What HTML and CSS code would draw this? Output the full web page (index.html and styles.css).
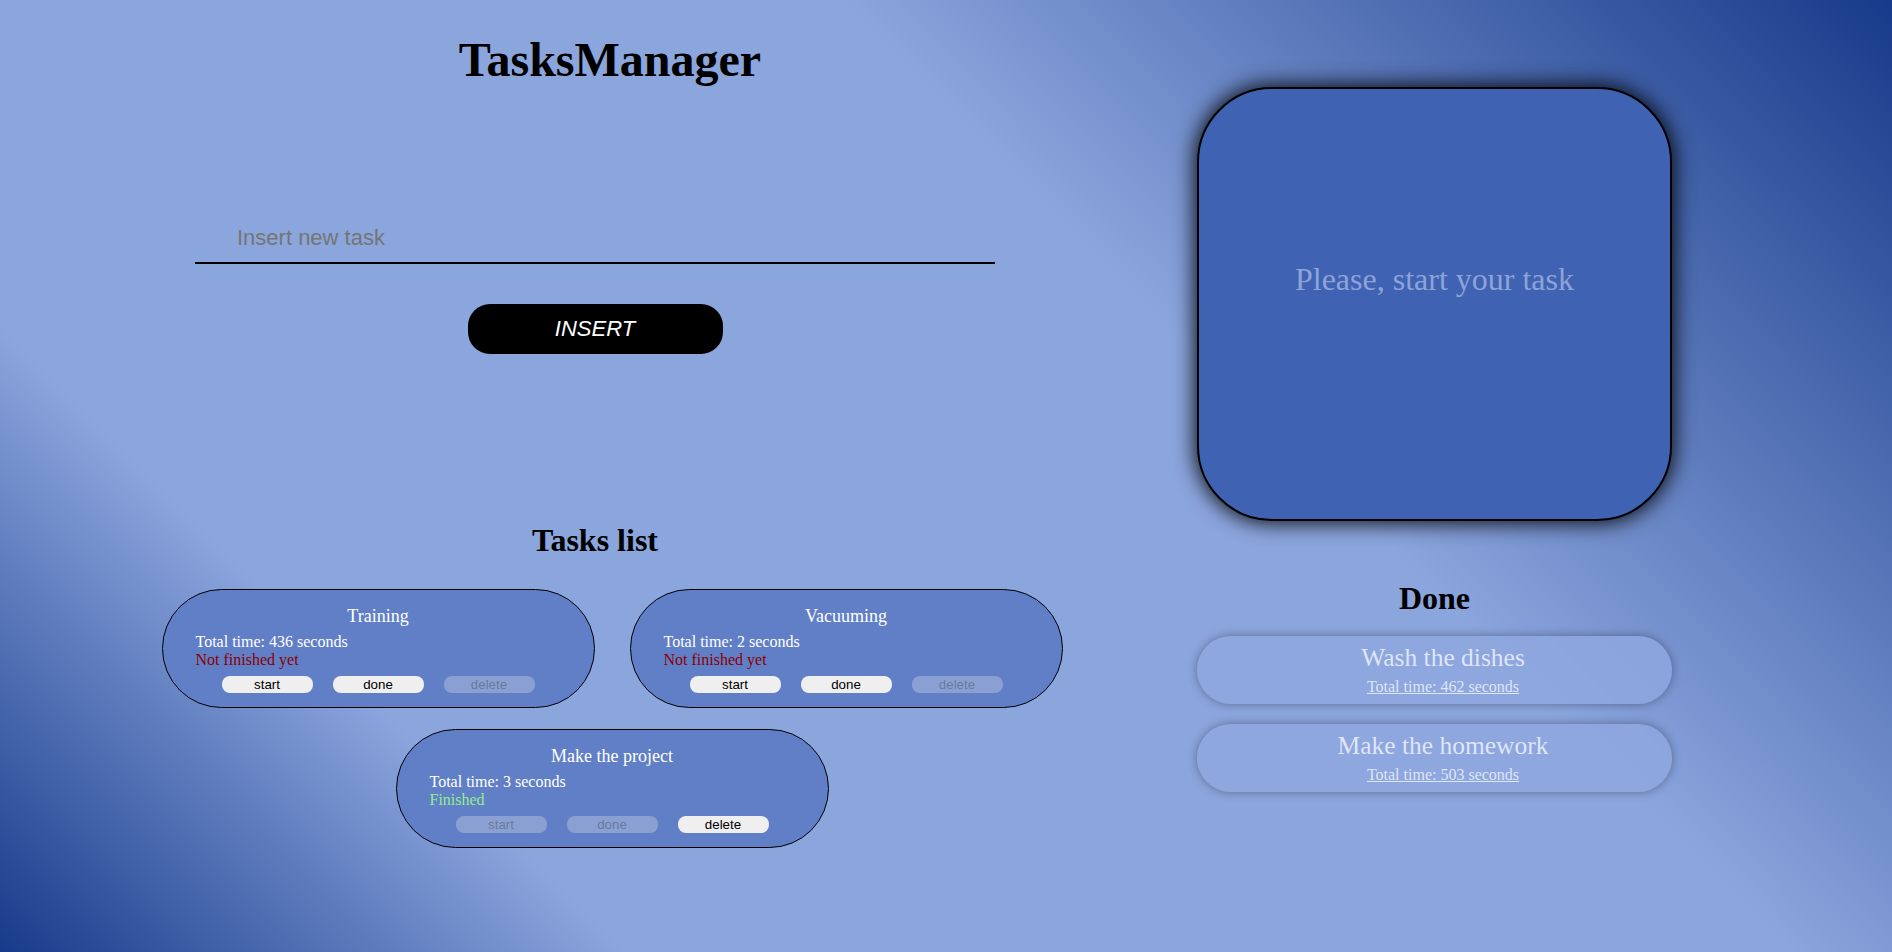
FILE: index.html
```html
<!DOCTYPE html>
<html lang="en">
<head>
<meta charset="utf-8">
<title>TasksManager</title>
<link rel="stylesheet" href="styles.css">
</head>
<body>
<main class="app">
  <section class="left">
    <h1 class="title">TasksManager</h1>
    <div class="form">
      <input class="task-input" type="text" placeholder="Insert new task">
      <button class="insert-btn" type="button">INSERT</button>
    </div>
    <h2 class="heading list-heading">Tasks list</h2>
    <div class="task-grid">
      <article class="task-card">
        <h3 class="task-name">Training</h3>
        <p class="task-line">Total time: 436 seconds</p>
        <p class="task-line status-pending">Not finished yet</p>
        <div class="task-actions">
          <button class="task-btn" type="button">start</button>
          <button class="task-btn" type="button">done</button>
          <button class="task-btn" type="button" disabled>delete</button>
        </div>
      </article>
      <article class="task-card">
        <h3 class="task-name">Vacuuming</h3>
        <p class="task-line">Total time: 2 seconds</p>
        <p class="task-line status-pending">Not finished yet</p>
        <div class="task-actions">
          <button class="task-btn" type="button">start</button>
          <button class="task-btn" type="button">done</button>
          <button class="task-btn" type="button" disabled>delete</button>
        </div>
      </article>
      <article class="task-card">
        <h3 class="task-name">Make the project</h3>
        <p class="task-line">Total time: 3 seconds</p>
        <p class="task-line status-finished">Finished</p>
        <div class="task-actions">
          <button class="task-btn" type="button" disabled>start</button>
          <button class="task-btn" type="button" disabled>done</button>
          <button class="task-btn" type="button">delete</button>
        </div>
      </article>
    </div>
  </section>
  <aside class="right">
    <div class="timer">Please, start your task</div>
    <h2 class="heading done-heading">Done</h2>
    <div class="done-list">
      <div class="done-card">
        <h3 class="done-name">Wash the dishes</h3>
        <p class="done-time">Total time: 462 seconds</p>
      </div>
      <div class="done-card">
        <h3 class="done-name">Make the homework</h3>
        <p class="done-time">Total time: 503 seconds</p>
      </div>
    </div>
  </aside>
</main>
</body>
</html>
```

FILE: styles.css
```css
html {
  height: 100%;
}

body {
  margin: 0;
  min-height: 100%;
  font-family: "Liberation Serif", "Times New Roman", serif;
  background: linear-gradient(45deg, #173a8a 0%, #8ba5dd 22%, #8ba5dd 63%, #173a8a 100%);
}

.app {
  display: grid;
  grid-template-columns: 1190px 475px;
  column-gap: 7px;
}

.title {
  margin: 32px 0 0;
  padding-left: 30px;
  font-size: 48px;
  line-height: 55px;
  font-weight: bold;
  text-align: center;
  color: #000;
}

.form {
  width: 800px;
  margin: 127px auto 0;
  display: flex;
  flex-direction: column;
  align-items: center;
}

.task-input {
  width: 800px;
  height: 50px;
  box-sizing: border-box;
  border: none;
  border-bottom: 2px solid #000;
  background: transparent;
  padding: 0 0 0 42px;
  font-family: "Liberation Sans", Arial, sans-serif;
  font-size: 22px;
  outline: none;
}

.task-input::placeholder {
  color: #757575;
}

.insert-btn {
  margin-top: 40px;
  width: 255px;
  height: 50px;
  border: none;
  border-radius: 22px;
  background: #000;
  color: #fff;
  font-family: "Liberation Sans", Arial, sans-serif;
  font-size: 22px;
  font-style: italic;
}

.heading {
  margin: 0;
  font-size: 32px;
  line-height: 37px;
  font-weight: bold;
  text-align: center;
  color: #000;
}

.list-heading {
  margin-top: 168px;
}

.task-grid {
  display: flex;
  flex-wrap: wrap;
  justify-content: center;
  gap: 21px 35px;
  padding-left: 34px;
  margin-top: 30px;
}

.task-card {
  width: 433px;
  box-sizing: border-box;
  border: 1px solid #000;
  border-radius: 60px;
  background: #617fc6;
  padding: 16px 33px 14px;
  color: #fff;
}

.task-name {
  margin: 0 0 6px;
  font-size: 18px;
  line-height: 21px;
  font-weight: normal;
  text-align: center;
}

.task-line {
  margin: 0;
  font-size: 16px;
  line-height: 18.4px;
}

.status-pending {
  color: #8b0000;
}

.status-finished {
  color: #90ee90;
}

.task-actions {
  display: flex;
  justify-content: center;
  gap: 20px;
  margin-top: 6px;
}

.task-btn {
  width: 91px;
  height: 17px;
  padding: 0;
  border: none;
  border-radius: 8px;
  background: #efefef;
  color: #000;
  font-family: "Liberation Sans", Arial, sans-serif;
  font-size: 13.33px;
  line-height: 17px;
}

.task-btn:disabled {
  background: rgba(239, 239, 239, 0.3);
  color: rgba(16, 16, 16, 0.3);
}

.timer {
  margin-top: 87px;
  height: 434px;
  box-sizing: border-box;
  border: 2px solid #000;
  border-radius: 75px;
  background: #3f62b3;
  box-shadow: 0 0 20px 3px rgba(0, 0, 0, 0.85);
  padding-top: 172px;
  color: #8ea3d8;
  font-size: 32px;
  line-height: 37px;
  text-align: center;
}

.done-heading {
  margin-top: 59px;
}

.done-list {
  display: flex;
  flex-direction: column;
  gap: 20px;
  margin-top: 19px;
}

.done-card {
  height: 68px;
  box-sizing: border-box;
  border-radius: 34px;
  background: rgba(143, 168, 224, 0.8);
  box-shadow: 0 0 10px rgba(0, 0, 0, 0.35);
  padding: 7px 0 8px 17px;
  text-align: center;
  color: rgba(255, 255, 255, 0.72);
}

.done-name {
  margin: 0 0 6px;
  font-size: 25.5px;
  line-height: 29px;
  font-weight: normal;
}

.done-time {
  margin: 0;
  font-size: 16px;
  line-height: 18px;
  text-decoration: underline;
}
```
